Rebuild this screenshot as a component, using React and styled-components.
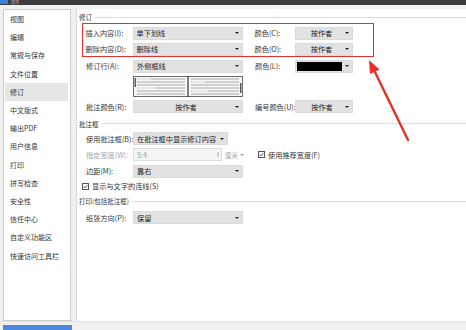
import React from 'react';
import styled, { createGlobalStyle } from 'styled-components';

const GlobalStyle = createGlobalStyle`
  html, body { margin: 0; padding: 0; }
  body {
    width: 466px; height: 330px; overflow: hidden; background: #f0f0f0;
    font-family: "Noto Sans CJK SC", "Noto Sans", sans-serif;
  }
`;

const Window = styled.div`
  position: relative;
  width: 466px;
  height: 330px;
  display: flex;
  flex-direction: column;
  background: #f0f0f0;
`;

const TitleBar = styled.div`
  height: 5px;
  flex-shrink: 0;
  background: #3c3c3c;
  display: flex;
  align-items: center;
  gap: 3px;
`;

const TitleIcon = styled.span`
  width: 8px;
  height: 4px;
  align-self: flex-start;
  background: #3b7fd9;
`;

const TitleText = styled.span`
  font-size: 4px;
  line-height: 5px;
  color: #c9b4b4;
`;

const Body = styled.div`
  display: flex;
  margin-top: 4px;
  height: 312px;
  flex-shrink: 0;
`;

const Sidebar = styled.ul`
  list-style: none;
  margin: 0 0 0 3px;
  padding: 0;
  width: 68px;
  box-sizing: border-box;
  border: 1px solid #cdcdcd;
  background: #fff;
`;

const NavItem = styled.li`
  height: 18.2px;
  display: flex;
  align-items: center;
  font-size: 7px;
  color: #333;
  white-space: nowrap;
  padding-left: ${p => (p.$active ? 5 : 6)}px;
  margin: 0 ${p => (p.$active ? 2 : 0)}px 0 ${p => (p.$active ? 1 : 0)}px;
  background: ${p => (p.$active ? '#e5e5e5' : 'transparent')};
`;

const Main = styled.div`
  flex: 1;
  margin-left: 5px;
  background: #fff;
  border-left: 1px solid #d8d8d8;
  padding: 2px 0 0 2px;
  display: flex;
  flex-direction: column;
`;

const Footer = styled.div`
  flex: 1;
  border-top: 1px solid #e4e4e4;
  padding: 3px 0 0 3px;
`;

const FooterButton = styled.div`
  width: 69px;
  height: 6px;
  background: #4f86de;
`;

const Heading = styled.div`
  display: flex;
  align-items: center;
  gap: 3px;
  height: 12px;
  margin-top: ${p => p.$mt || 0}px;
  font-size: 6.5px;
  color: #333;
  white-space: nowrap;
  &::after {
    content: '';
    flex: 1;
    height: 1px;
    background: #dedede;
  }
`;

const Highlight = styled.div`
  margin-left: 3px;
  width: 292px;
  box-sizing: border-box;
  border: 1.5px solid #e3302f;
  padding: 2.5px 0 0 2.5px;
  display: flex;
  flex-direction: column;
  gap: 3px;
`;

const Rows = styled.div`
  padding-left: 7px;
  display: flex;
  flex-direction: column;
`;

const Row = styled.div`
  display: flex;
  align-items: center;
  height: 13px;
  margin-top: ${p => p.$mt ?? 0}px;
  margin-left: ${p => p.$ml || 0}px;
`;

const Label = styled.span`
  width: ${p => p.$w}px;
  margin-left: ${p => p.$ml || 0}px;
  flex-shrink: 0;
  font-size: 7.2px;
  color: ${p => (p.$disabled ? '#a8a8a8' : '#333')};
  white-space: nowrap;
`;

const Select = styled.div`
  width: ${p => p.$w}px;
  height: 13px;
  flex-shrink: 0;
  box-sizing: border-box;
  background: #e2e2e2;
  border: 1px solid #dadada;
  display: flex;
  align-items: center;
  padding: 0 3px 0 ${p => (p.$swatch ? 1 : 3)}px;
  font-size: 7.2px;
  color: #222;
  white-space: nowrap;
`;

const Value = styled.span`
  flex: 1;
  text-align: ${p => (p.$center ? 'center' : 'left')};
`;

const Swatch = styled.span`
  width: 45px;
  height: 9px;
  background: #000;
  margin-right: auto;
`;

const Caret = styled.span`
  width: 0;
  height: 0;
  flex-shrink: 0;
  border-left: 2px solid transparent;
  border-right: 2px solid transparent;
  border-top: 2.5px solid ${p => (p.$muted ? '#a0a0a0' : '#222')};
`;

const PreviewBox = styled.div`
  margin: 3px 0 0 47px;
  width: 110px;
  height: 21px;
`;

const SpinInput = styled.div`
  width: 89px;
  height: 13px;
  box-sizing: border-box;
  border: 1px solid #dcdcdc;
  background: #f4f4f4;
  display: flex;
  align-items: center;
  padding: 0 2px 0 3px;
  font-size: 7.2px;
  color: #a0a0a0;
`;

const Spin = styled.span`
  display: flex;
  flex-direction: column;
  gap: 1px;
  &::before, &::after {
    content: '';
    width: 0; height: 0;
    border-left: 1.5px solid transparent;
    border-right: 1.5px solid transparent;
  }
  &::before { border-bottom: 2px solid #9a9a9a; }
  &::after { border-top: 2px solid #9a9a9a; }
`;

const Unit = styled.span`
  display: flex;
  align-items: center;
  gap: 2px;
  margin-left: 3px;
  width: 21px;
  font-size: 6.5px;
  color: #a8a8a8;
`;

const CheckLabel = styled.span`
  margin-left: ${p => p.$ml || 0}px;
  display: flex;
  align-items: center;
  gap: 3px;
  font-size: 7.2px;
  color: #333;
  white-space: nowrap;
`;

const Overlay = styled.svg`
  position: absolute;
  left: 0;
  top: 0;
  pointer-events: none;
`;

const navItems = ['视图', '编辑', '常规与保存', '文件位置', '修订', '中文版式', '输出PDF', '用户信息', '打印', '拼写检查', '安全性', '信任中心', '自定义功能区', '快速访问工具栏'];

function Check() {
  return (
    <svg width="7" height="7" viewBox="0 0 7 7">
      <rect x="0.5" y="0.5" width="6" height="6" fill="#fff" stroke="#555" />
      <path d="M1.5 3.6 L2.9 5 L5.5 1.9" fill="none" stroke="#333" strokeWidth="0.8" />
    </svg>
  );
}

function Preview() {
  const ys = [3, 6, 9, 12, 15, 18];
  return (
    <PreviewBox>
      <svg width="110" height="21" viewBox="0 0 110 21">
        <rect x="0.5" y="0.5" width="109" height="20" fill="#f7f7f7" stroke="#6a6a6a" />
        <line x1="55" y1="0" x2="55" y2="21" stroke="#333" strokeWidth="1.2" />
        {ys.map(y => (
          <g key={y}>
            <line x1="4" y1={y} x2="52" y2={y} stroke="#a8a8a8" strokeWidth="1" />
            <line x1="58" y1={y} x2="106" y2={y} stroke="#a8a8a8" strokeWidth="1" />
          </g>
        ))}
        <line x1="5" y1="3" x2="18" y2="3" stroke="#fff" strokeWidth="1" />
        <line x1="5" y1="12" x2="22" y2="12" stroke="#fff" strokeWidth="1" />
        <line x1="59" y1="6" x2="72" y2="6" stroke="#fff" strokeWidth="1" />
        <line x1="59" y1="15" x2="75" y2="15" stroke="#fff" strokeWidth="1" />
        <line x1="2.2" y1="2" x2="2.2" y2="11" stroke="#111" strokeWidth="1" />
        <line x1="107.8" y1="7" x2="107.8" y2="17" stroke="#111" strokeWidth="1" />
      </svg>
    </PreviewBox>
  );
}

export default function App() {
  return (
    <Window>
      <GlobalStyle />
      <TitleBar>
        <TitleIcon />
        <TitleText>选项</TitleText>
      </TitleBar>
      <Body>
        <Sidebar>
          {navItems.map(n => (
            <NavItem key={n} $active={n === '修订'}>{n}</NavItem>
          ))}
        </Sidebar>
        <Main>
          <Heading>修订</Heading>
          <Highlight>
            <Row>
              <Label $w={47}>插入内容(I):</Label>
              <Select $w={110}><Value>单下划线</Value><Caret /></Select>
              <Label $w={40} $ml={12}>颜色(C):</Label>
              <Select $w={58}><Value $center>按作者</Value><Caret /></Select>
            </Row>
            <Row>
              <Label $w={47}>删除内容(D):</Label>
              <Select $w={110}><Value>删除线</Value><Caret /></Select>
              <Label $w={40} $ml={12}>颜色(O):</Label>
              <Select $w={58}><Value $center>按作者</Value><Caret /></Select>
            </Row>
          </Highlight>
          <Rows>
            <Row $mt={3}>
              <Label $w={47}>修订行(A):</Label>
              <Select $w={110}><Value>外侧框线</Value><Caret /></Select>
              <Label $w={40} $ml={12}>颜色(L):</Label>
              <Select $w={58} $swatch><Swatch /><Caret /></Select>
            </Row>
            <Preview />
            <Row $mt={3.5}>
              <Label $w={47}>批注颜色(R):</Label>
              <Select $w={110}><Value $center>按作者</Value><Caret /></Select>
              <Label $w={40} $ml={12}>编号颜色(U):</Label>
              <Select $w={58}><Value $center>按作者</Value><Caret /></Select>
            </Row>
          </Rows>
          <Heading $mt={4.5}>批注框</Heading>
          <Rows>
            <Row $mt={2.5}>
              <Label $w={47}>使用批注框(B):</Label>
              <Select $w={95}><Value>在批注框中显示修订内容</Value><Caret /></Select>
            </Row>
            <Row $mt={3}>
              <Label $w={47} $disabled>指定宽度(W):</Label>
              <SpinInput><Value>9.4</Value><Spin /></SpinInput>
              <Unit>厘米<Caret $muted /></Unit>
              <CheckLabel $ml={12}><Check />使用推荐宽度(F)</CheckLabel>
            </Row>
            <Row $mt={3.5}>
              <Label $w={47}>边距(M):</Label>
              <Select $w={110}><Value>靠右</Value><Caret /></Select>
            </Row>
            <Row $mt={2} $ml={-4}>
              <CheckLabel><Check />显示与文字的连线(S)</CheckLabel>
            </Row>
          </Rows>
          <Heading $mt={2.5}>打印(包括批注框)</Heading>
          <Rows>
            <Row $mt={4}>
              <Label $w={47}>纸张方向(P):</Label>
              <Select $w={110}><Value>保留</Value><Caret /></Select>
            </Row>
          </Rows>
        </Main>
      </Body>
      <Footer>
        <FooterButton />
      </Footer>
      <Overlay width="466" height="330" viewBox="0 0 466 330">
        <line x1="408" y1="140" x2="373" y2="68" stroke="#e8302b" strokeWidth="2.4" strokeLinecap="round" />
        <polygon points="369,60 379.5,69.5 370,74" fill="#e8302b" />
      </Overlay>
    </Window>
  );
}
